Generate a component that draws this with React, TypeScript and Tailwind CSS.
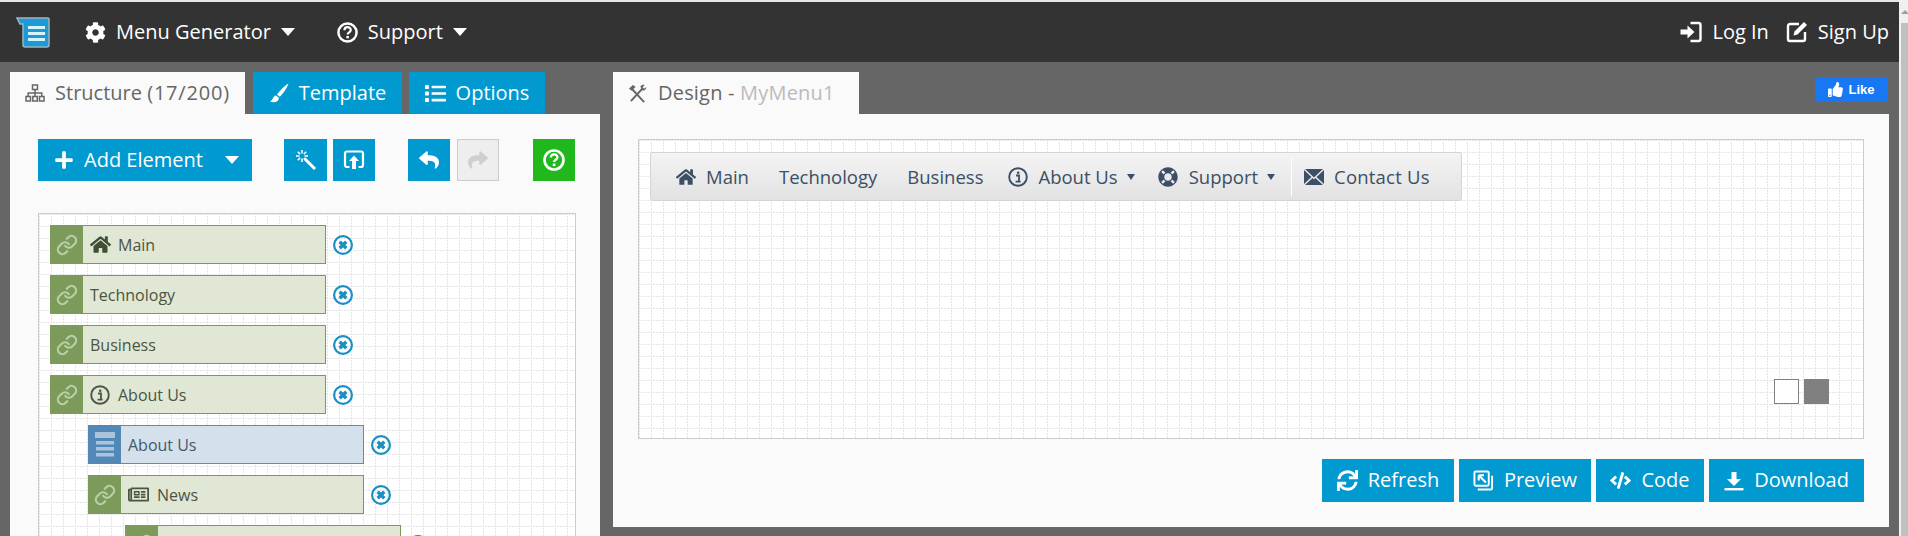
import React from "react";
import { Link as LinkIcon } from "lucide-react";
import {
  FaCode,
  FaCog,
  FaHome,
  FaLifeRing,
  FaList,
  FaPlus,
  FaRegNewspaper,
  FaReply,
  FaShare,
  FaSync,
  FaThumbsUp,
} from "react-icons/fa";

// two white stripe layers on top of the line grid make the lines dotted
const gridBg =
  "bg-white bg-[linear-gradient(to_right,#fff_1px,transparent_1px),linear-gradient(to_bottom,#fff_1px,transparent_1px),linear-gradient(to_right,#e4e4e4_1px,transparent_1px),linear-gradient(to_bottom,#e4e4e4_1px,transparent_1px)] bg-[length:3px_3px,3px_3px,12px_12px,12px_12px] bg-[position:1px_0,0_1px,0_0,0_0]";

const InfoIcon = ({ className }: { className?: string }) => (
  <svg viewBox="0 0 20 20" className={className} fill="none" stroke="currentColor">
    <circle cx="10" cy="10" r="8.8" strokeWidth="1.9" />
    <path d="M8 8.5h3v6M7.6 14.7h5" strokeWidth="1.8" />
    <circle cx="10.2" cy="5.7" r="1.3" fill="currentColor" stroke="none" />
  </svg>
);

const HelpIcon = ({ className }: { className?: string }) => (
  <svg viewBox="0 0 22 22" className={className} fill="none" stroke="currentColor">
    <circle cx="11" cy="11" r="9.5" strokeWidth="2.6" />
    <path d="M7.8 8.6c0-4.200 6.600-4.200 6.600-0.300 0 2.400-3.300 2.500-3.300 4.800" strokeWidth="2.300" />
    <rect x="9.800" y="14.600" width="2.600" height="2.500" fill="currentColor" stroke="none" />
  </svg>
);

const RemoveIcon = () => (
  <svg viewBox="0 0 20 20" className="w-[20px] h-[20px] shrink-0 text-[#1a8fc4]" fill="none" stroke="currentColor">
    <circle cx="10" cy="10" r="8.900" strokeWidth="2.200" />
    <path d="M6.700 6.700l6.600 6.600M13.300 6.700l-6.600 6.600" strokeWidth="3.400" />
  </svg>
);

const WandIcon = () => (
  <svg viewBox="0 0 22 22" className="w-[22px] h-[22px]" fill="none" stroke="currentColor">
    <path d="M9.500 9.500L20 20" strokeWidth="3" />
    <path d="M7 1v3.500M7 9.500V13M1 7h3.500M9.500 7H13M2.800 2.800l2.300 2.300M9 9l2 2M11.200 2.800L8.900 5.100M2.800 11.200l2.300-2.300" strokeWidth="1.600" />
  </svg>
);

const UploadBoxIcon = () => (
  <svg viewBox="0 0 22 22" className="w-[22px] h-[22px]" fill="none" stroke="currentColor">
    <path d="M6.500 18H4a2 2 0 0 1-2-2V4.500a2 2 0 0 1 2-2h14a2 2 0 0 1 2 2V16a2 2 0 0 1-2 2h-2.500" strokeWidth="2.200" />
    <path d="M11 6.500l5 5.500h-3v8H9v-8H6z" fill="currentColor" stroke="none" />
  </svg>
);

const PreviewIcon = () => (
  <svg viewBox="0 0 22 22" className="w-[21px] h-[21px]" fill="none" stroke="currentColor">
    <rect x="1.500" y="1.500" width="15" height="15" rx="1.500" strokeWidth="2" />
    <path d="M6 5.500h5.500M6 5.500V11M6 5.500l7.500 7.500" strokeWidth="2.200" />
    <path d="M20 6v12.500a2 2 0 0 1-2 2H5" strokeWidth="2" />
  </svg>
);

const DownloadIcon = () => (
  <svg viewBox="0 0 20 20" className="w-5 h-5" fill="currentColor">
    <path d="M7.500 1h5v7H17l-7 7-7-7h4.500z" />
    <rect x="0.500" y="17" width="19" height="2.400" />
  </svg>
);

const LoginIcon = () => (
  <svg viewBox="0 0 22 22" className="w-[22px] h-[22px]" fill="none" stroke="currentColor">
    <path d="M0.500 8.500h7V4.500l7 6.500-7 6.500v-4h-7z" fill="currentColor" stroke="none" />
    <path d="M10.500 2h8a2 2 0 0 1 2 2v14a2 2 0 0 1-2 2h-8" strokeWidth="2.400" />
  </svg>
);

const SignUpIcon = () => (
  <svg viewBox="0 0 22 22" className="w-[22px] h-[22px]" fill="none" stroke="currentColor">
    <path d="M13 3H4a2 2 0 0 0-2 2v13a2 2 0 0 0 2 2h13a2 2 0 0 0 2-2v-7" strokeWidth="2.400" />
    <path d="M18 1l3 3-9.500 9.500-4 1 1-4z" fill="currentColor" stroke="none" />
  </svg>
);

const MailIcon = () => (
  <svg viewBox="0 0 20 16" className="w-5 h-4" fill="currentColor">
    <path d="M0 1l7.500 7L0 15zM20 1l-7.500 7 7.500 7zM1 0h18l-9 8.500zM8.600 9.100L10 10.400l1.400-1.300L19 16H1z" />
  </svg>
);

const PageIcon = () => (
  <svg viewBox="0 0 20 26" className="w-5 h-[26px]">
    <rect x="0" y="0" width="20" height="6" fill="#a9c4dc" />
    <rect x="1" y="9" width="18" height="3.500" fill="#a9c4dc" />
    <rect x="1" y="15" width="18" height="3.500" fill="#a9c4dc" />
    <rect x="1" y="21" width="18" height="3.500" fill="#a9c4dc" />
  </svg>
);

const SitemapIcon = () => (
  <svg viewBox="0 0 20 18" className="w-5 h-[18px]" fill="none" stroke="currentColor" strokeWidth="1.500">
    <rect x="7.500" y="1" width="5" height="4.500" />
    <rect x="1" y="12.500" width="4.500" height="4.500" />
    <rect x="7.800" y="12.500" width="4.500" height="4.500" />
    <rect x="14.500" y="12.500" width="4.500" height="4.500" />
    <path d="M10 5.500v7M3.200 12.500V9h13.600v3.500" />
  </svg>
);

const BrushIcon = () => (
  <svg viewBox="0 0 20 20" className="w-5 h-5" fill="currentColor">
    <path d="M19.500 0.500C15 3 10.500 8 8 11.500l2.800 2.300C14 10.500 18 5.500 19.500 0.500z" />
    <path d="M7 12.500C3.500 13 4.500 17 1 18.500c4 1.500 9 0.500 8.800-3.800z" />
  </svg>
);

const ToolsIcon = () => (
  <svg viewBox="0 0 20 20" className="w-[19px] h-[19px]" fill="none" stroke="currentColor">
    <path d="M4 5l13 14" strokeWidth="2" />
    <path d="M1 5l4-4 3 2-4 4z" fill="currentColor" stroke="none" />
    <path d="M15 5L3 18" strokeWidth="2" />
    <path d="M13 2.500c1-1.500 3-2 4.500-1.500l-2 2.500 1.500 1.500 2.300-1.800c0.300 2-1.800 4.300-4.300 3.500z" fill="currentColor" stroke="none" />
  </svg>
);

const Logo = () => (
  <svg viewBox="0 0 34 31" className="w-[34px] h-[31px] ml-4">
    <path d="M1 1h31a1 1 0 0 1 1 1v26a2 2 0 0 1-2 2H9a2 2 0 0 1-2-2V7H4z" fill="#1a9ad6" stroke="#9fb4bd" strokeWidth="1.500" />
    <rect x="12" y="9" width="17" height="3" fill="#d8f2fb" />
    <rect x="12" y="15" width="17" height="3" fill="#d8f2fb" />
    <rect x="12" y="21" width="17" height="3" fill="#d8f2fb" />
  </svg>
);

const Caret = ({ className }: { className?: string }) => (
  <span className={`w-0 h-0 border-x-[7.5px] border-x-transparent border-t-[8px] border-t-white ${className || ""}`} />
);

const HeaderItem = ({ icon, label, caret }: { icon: React.ReactNode; label: string; caret?: boolean }) => (
  <div className="flex items-center text-white text-[20px]">
    {icon}
    <span className="ml-[10px]">{label}</span>
    {caret && <Caret className="ml-[10px]" />}
  </div>
);

const Tab = ({ active, children, width }: { active?: boolean; children: React.ReactNode; width: string }) => (
  <div
    className={`flex items-center justify-center gap-[10px] h-[42px] text-[20px] ${width} ${
      active ? "bg-[#fafafa] text-[#666666]" : "bg-[#0099d0] text-white"
    }`}
  >
    {children}
  </div>
);

const SquareBtn = ({ children, className }: { children: React.ReactNode; className: string }) => (
  <div className={`flex items-center justify-center h-[42px] shrink-0 ${className}`}>{children}</div>
);

const ActionBtn = ({ icon, label, width }: { icon: React.ReactNode; label: string; width: string }) => (
  <div className={`flex items-center justify-center gap-[10px] h-[43px] bg-[#0099d0] text-white text-[20px] ${width}`}>
    {icon}
    <span className="-mt-px">{label}</span>
  </div>
);

type RowProps = { level: number; label?: string; icon?: React.ReactNode; kind?: "link" | "page" };

const Row = ({ level, label, icon, kind = "link" }: RowProps) => {
  const isPage = kind === "page";
  const indent = level === 0 ? "ml-[11px]" : level === 1 ? "ml-[49px]" : "ml-[86px]";
  return (
    <div className={`flex items-center gap-[7px] ${indent}`}>
      <div
        className={`flex w-[276px] h-[39px] shrink-0 border ${
          isPage ? "bg-[#d4e1ec] border-[#5b8cb5] text-[#44586b]" : "bg-[#e0e7d5] border-[#7a9a58] text-[#4c5443]"
        }`}
      >
        <div
          className={`flex items-center justify-center w-[33px] shrink-0 -my-px -ml-px ${
            isPage ? "bg-[#5288b5]" : "bg-[#7c9a59]"
          }`}
        >
          {isPage ? <PageIcon /> : <LinkIcon className="w-[22px] h-[22px] text-[#b9cfa6]" strokeWidth={2.4} />}
        </div>
        <div className="flex items-center text-[16px] pl-[7px]">
          {icon}
          {label}
        </div>
      </div>
      <RemoveIcon />
    </div>
  );
};

const NavItem = ({ icon, label, caret, className }: { icon?: React.ReactNode; label: string; caret?: boolean; className: string }) => (
  <div className={`flex items-center text-[#3b4f66] text-[18.500px] ${className}`}>
    {icon}
    <span>{label}</span>
    {caret && <span className="ml-[9px] w-0 h-0 border-x-[4px] border-x-transparent border-t-[6px] border-t-[#3b4f66]" />}
  </div>
);

export default function App() {
  return (
    <div className="flex w-[1908px] h-[536px] overflow-hidden font-['Open_Sans',sans-serif]">
      <div className="flex flex-col w-[1899px] shrink-0 bg-[#666666]">
        <div className="h-[2px] bg-[#e6e6e6] shrink-0" />
        {/* top bar */}
        <div className="flex items-center justify-between h-[60px] shrink-0 bg-[#333333]">
          <div className="flex items-center">
            <Logo />
            <div className="ml-[35px]">
              <HeaderItem icon={<FaCog className="w-[21px] h-[21px]" />} label="Menu Generator" caret />
            </div>
            <div className="ml-[42px]">
              <HeaderItem icon={<HelpIcon className="w-[21px] h-[21px]" />} label="Support" caret />
            </div>
          </div>
          <div className="flex items-center gap-[17px] pr-[10px]">
            <HeaderItem icon={<LoginIcon />} label="Log In" />
            <HeaderItem icon={<SignUpIcon />} label="Sign Up" />
          </div>
        </div>

        <div className="flex gap-[13px] pl-[10px] pt-[10px] min-h-0 flex-1">
          {/* structure column */}
          <div className="flex flex-col w-[590px] shrink-0">
            <div className="flex shrink-0">
              <Tab active width="w-[235px]">
                <SitemapIcon />
                <span>
                  Structure <span className="tracking-[0.800px]">(17/200)</span>
                </span>
              </Tab>
              <div className="ml-[8px]">
                <Tab width="w-[149px]">
                  <BrushIcon />
                  <span>Template</span>
                </Tab>
              </div>
              <div className="ml-[7px]">
                <Tab width="w-[136px]">
                  <FaList className="w-[21px] h-[21px]" />
                  <span>Options</span>
                </Tab>
              </div>
            </div>
            <div className="flex-1 bg-[#fafafa] pl-[28px] pt-[25px]">
              <div className="flex items-center text-white">
                <div className="flex items-center justify-between w-[214px] shrink-0 h-[42px] bg-[#0099d0] pl-[16px] pr-[13px] text-[20px]">
                  <span className="flex items-center gap-[10px]">
                    <FaPlus className="w-[20px] h-[20px]" />
                    Add Element
                  </span>
                  <Caret />
                </div>
                <SquareBtn className="w-[43px] bg-[#0099d0] ml-[32px]">
                  <WandIcon />
                </SquareBtn>
                <SquareBtn className="w-[42px] bg-[#0099d0] ml-[6px]">
                  <UploadBoxIcon />
                </SquareBtn>
                <SquareBtn className="w-[42px] bg-[#0099d0] ml-[33px]">
                  <FaReply className="w-[20px] h-[20px]" />
                </SquareBtn>
                <SquareBtn className="w-[42px] bg-[#eeeeee] border border-[#cccccc] text-[#cfcfcf] ml-[7px]">
                  <FaShare className="w-[20px] h-[20px]" />
                </SquareBtn>
                <SquareBtn className="w-[42px] bg-[#20b81c] ml-[34px]">
                  <HelpIcon className="w-[22px] h-[22px]" />
                </SquareBtn>
              </div>
              <div className={`flex flex-col gap-[11px] w-[538px] h-[400px] mt-[32px] pt-[11px] border border-[#cccccc] ${gridBg}`}>
                <Row level={0} label="Main" icon={<FaHome className="w-[21px] h-[21px] mr-[7px] text-[#3f4f35]" />} />
                <Row level={0} label="Technology" />
                <Row level={0} label="Business" />
                <Row level={0} label="About Us" icon={<InfoIcon className="w-5 h-5 mr-2 text-[#4c5443]" />} />
                <Row level={1} label="About Us" kind="page" />
                <Row level={1} label="News" icon={<FaRegNewspaper className="w-[21px] h-[21px] mr-2 text-[#4c5443]" />} />
                <Row level={2} />
              </div>
            </div>
          </div>

          {/* design column */}
          <div className="flex flex-col w-[1276px] shrink-0 h-[455px]">
            <div className="flex justify-between shrink-0">
              <div className="flex items-center gap-[9px] w-[246px] h-[42px] pl-[15px] bg-[#fafafa] text-[20px] text-[#666666]">
                <ToolsIcon />
                <span className="ml-[2px] tracking-[0.200px]">
                  Design - <span className="text-[#bbbbbb]">MyMenu1</span>
                </span>
              </div>
              <div className="flex items-center justify-center gap-[5px] w-[73px] h-[25px] mt-[5px] mr-px rounded-[3px] bg-[#1877f2] text-white text-[13px] font-bold font-['Liberation_Sans',sans-serif]">
                <FaThumbsUp className="w-[15px] h-[15px]" />
                Like
              </div>
            </div>
            <div className="flex-1 bg-[#fafafa] pl-[25px] pt-[25px]">
              <div className={`flex flex-col justify-between w-[1226px] h-[300px] border border-[#cccccc] pl-[11px] pr-[10px] pt-[12px] pb-[34px] ${gridBg}`}>
                <div className="flex items-center w-[812px] h-[49px] pl-[25px] rounded-[3px] border border-[#d4d4d4] bg-gradient-to-b from-[#f4f4f4] to-[#e2e2e2]">
                  <NavItem className="" icon={<FaHome className="w-5 h-5 mr-[10px]" />} label="Main" />
                  <NavItem className="ml-[30px]" label="Technology" />
                  <NavItem className="ml-[30px]" label="Business" />
                  <NavItem className="ml-[25px]" icon={<InfoIcon className="w-5 h-5 mr-[10px]" />} label="About Us" caret />
                  <NavItem className="ml-[23px]" icon={<FaLifeRing className="w-5 h-5 mr-[11px]" />} label="Support" caret />
                  <div className="w-px h-[38px] bg-white ml-[16px]" />
                  <NavItem className="ml-[12px]" icon={<MailIcon />} label="" />
                  <span className="ml-[10px] text-[18.500px] tracking-[0.200px] text-[#3b4f66]">Contact Us</span>
                </div>
                <div className="flex justify-end gap-[5px] pr-[24px]">
                  <div className="w-[25px] h-[25px] bg-white border border-[#808080]" />
                  <div className="w-[25px] h-[25px] bg-[#808080]" />
                </div>
              </div>
              <div className="flex justify-end gap-[5px] w-[1226px] mt-[20px]">
                <ActionBtn icon={<FaSync className="w-[21px] h-[21px]" />} label="Refresh" width="w-[132px]" />
                <ActionBtn icon={<PreviewIcon />} label="Preview" width="w-[132px]" />
                <ActionBtn icon={<FaCode className="w-[21px] h-[21px]" />} label="Code" width="w-[108px]" />
                <ActionBtn icon={<DownloadIcon />} label="Download" width="w-[155px]" />
              </div>
            </div>
          </div>
        </div>
      </div>

      {/* browser scrollbar */}
      <div className="flex flex-col w-[9px] shrink-0 bg-[#f0f0f0] pl-[2px]">
        <div className="flex items-center justify-center h-[23px]">
          <span className="w-0 h-0 border-x-[4px] border-x-transparent border-b-[4px] border-b-[#a0a0a0]" />
        </div>
        <div className="flex-1 bg-[#c0c0c0]" />
      </div>
    </div>
  );
}
